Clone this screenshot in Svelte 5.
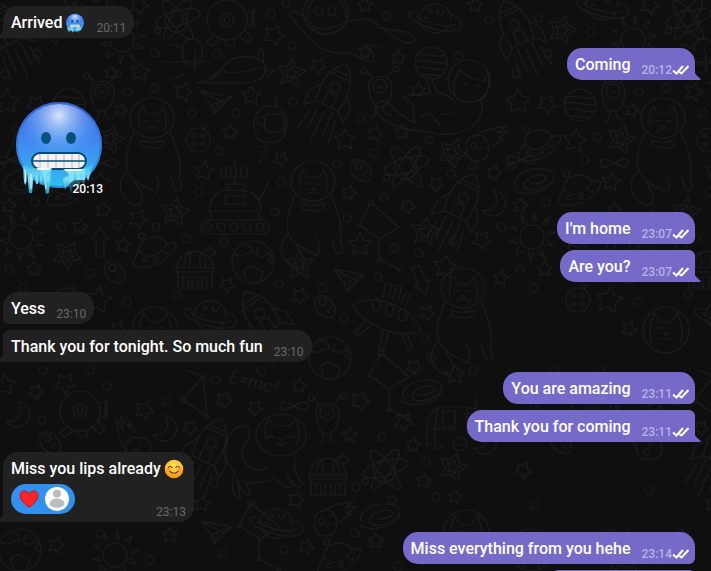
<script>
  const messages = [
    { text: "Arrived", emoji: "cold", time: "20:11", last: true },
    { own: true, text: "Coming", time: "20:12", first: true, last: true },
    { sticker: true, time: "20:13", first: true },
    { own: true, text: "I'm home", time: "23:07", first: true },
    { own: true, text: "Are you?", time: "23:07", last: true },
    { text: "Yess", time: "23:10", first: true },
    { text: "Thank you for tonight. So much fun", time: "23:10", last: true },
    { own: true, text: "You are amazing", time: "23:11", first: true },
    { own: true, text: "Thank you for coming", time: "23:11", last: true },
    { text: "Miss you lips already", emoji: "smile", time: "23:13", first: true, last: true, reaction: true },
    { own: true, text: "Miss everything from you hehe", time: "23:14", first: true },
    { own: true, text: "", last: true }
  ];

  // wallpaper doodles, one tile is 511 wide
  const tile = 511;
  const rings = [
    [155, 53], [217, 54], [271, 14], [292, 46], [286, 3], [387, 16], [128, 92], [155, 88], [192, 113],
    [236, 113], [293, 102], [361, 119], [374, 153], [219, 151], [281, 182], [199, 192], [337, 164],
    [384, 197], [275, 212], [347, 218], [117, 225], [156, 227], [186, 239], [224, 242], [378, 277],
    [279, 284], [489, 20], [27, 18], [80, 32], [459, 56], [37, 54], [5, 74], [429, 140], [86, 137],
    [473, 166], [0, 166], [451, 174], [74, 160], [35, 202], [501, 227], [453, 241], [419, 253],
    [395, 248], [9, 269], [61, 227], [90, 273], [127, 302], [177, 295], [43, 370], [107, 386],
    [90, 370], [261, 371], [216, 380], [167, 401], [42, 420], [214, 483], [322, 288], [344, 319],
    [425, 337], [431, 358], [473, 371], [382, 437], [356, 487], [426, 462], [392, 500], [436, 497],
    [355, 533], [223, 553], [284, 550], [398, 566], [23, 288], [138, 490], [24, 505], [100, 534], [150, 560]
  ];
  const stars = [
    [139, 5, 10], [274, 35, 11], [365, 5, 8], [318, 66, 8], [183, 92, 10], [140, 72, 10], [111, 73, 7],
    [251, 96, 10], [230, 132, 8], [345, 140, 11], [375, 134, 8], [204, 171, 10], [281, 159, 8],
    [349, 193, 8], [138, 219, 10], [123, 245, 8], [360, 245, 12], [475, 5, 8], [398, 58, 8],
    [418, 90, 8], [7, 102, 13], [36, 104, 10], [121, 110, 7], [64, 141, 12], [402, 132, 8],
    [494, 173, 8], [436, 184, 8], [408, 206, 8], [100, 182, 10], [9, 206, 8], [482, 240, 10],
    [445, 267, 12], [501, 278, 8], [80, 227, 8], [103, 210, 8], [34, 269, 8], [227, 285, 8],
    [98, 300, 14], [65, 383, 11], [36, 392, 8], [144, 410, 10], [224, 400, 9], [255, 408, 8],
    [190, 428, 8], [5, 385, 11], [300, 296, 9], [427, 313, 8], [414, 367, 8], [455, 375, 10],
    [299, 386, 8], [360, 401, 10], [404, 422, 10], [350, 435, 8], [424, 481, 8], [413, 445, 8],
    [455, 497, 7], [296, 500, 9], [376, 541, 8], [306, 547, 8], [202, 504, 8], [56, 545, 9],
    [118, 329, 8], [365, 52, 7], [12, 470, 9], [490, 545, 10], [170, 535, 8]
  ];
  const bigStars = [[291, 73], [51, 30], [110, 139], [175, 212], [300, 265], [452, 153], [425, 232], [67, 255], [453, 467]];
  const doodles = [
    ["atom", 177, 20], ["atom", 406, 167], ["atom", 385, 470], ["sub", 227, 20], ["sub", 80, 411],
    ["probe", 192, 62], ["shuttle", 240, 72], ["rocket", 332, 95, 25], ["rocket", 264, 320, -35],
    ["rocket", 7, 32, -25], ["rocket", 460, 205, 25], ["rocket", 208, 450, 25], ["alien", 380, 93],
    ["alien", 102, 98], ["alien", 327, 420], ["plane", 217, 100], ["plane", 350, 278], ["plane", 217, 530],
    ["helmet", 270, 122], ["bowling", 198, 140], ["cat", 152, 150], ["cat", 463, 320], ["cat", 313, 213],
    ["walker", 281, 450], ["curled", 442, 95], ["flying", 345, 35], ["tank", 235, 200], ["potato", 361, 171],
    ["potato", 115, 273], ["potato", 325, 307], ["potato", 50, 443], ["kite", 375, 235], ["kite", 385, 385],
    ["kite", 255, 535], ["striped", 431, 63], ["striped", 69, 105], ["saturn", 435, 18], ["saturn", 91, 5],
    ["saturn", 210, 315], ["saturn", 276, 523], ["sun", 122, 40], ["sun", 21, 237], ["galaxy", 23, 182],
    ["galaxy", 422, 393], ["galaxy", 380, 517], ["comet", 483, 143], ["comet", 133, 443, -90],
    ["comet", 331, 518], ["moon", 494, 202], ["moon", 18, 413], ["moon", 165, 427], ["ufo", 153, 252],
    ["ufo", 338, 558], ["ufo", 67, 190], ["ufo", 27, 145], ["lander", 387, 313], ["dome", 195, 268],
    ["dome", 328, 475], ["earth", 253, 262], ["earth", 330, 358], ["earth", 20, 550], ["arrow", 100, 245],
    ["arrow", 420, 278, 160], ["infinity", 103, 163], ["infinity", 294, 406], ["infinity", 10, 160],
    ["van", 447, 425], ["triangle", 197, 390], ["face", 155, 330], ["face", 466, 533], ["sun", 115, 555],
    ["moon", 485, 440], ["bowling", 67, 300]
  ];

  const shapes = {
    atom: "M-11-3A11 11 0 1 1 10 5A11 11 0 1 1-11-3M-22 4C-20-8 20-16 23-8S-16 15-22 4M-14-19C-5-24 20 14 15 19S-20-10-14-19M13-20C2-24-17 16-13 20S20-13 13-20M-20 8a3 3 0 1 0 1 0",
    sub: "M-20 0A20 20 0 1 1 20 0A20 20 0 1 1-20 0M-7 0A7 7 0 1 1 7 0A7 7 0 1 1-7 0M-3 0a3 3 0 1 0 6 0a3 3 0 1 0-6 0M20-8h5v14h-5M27-12v20M-13 16l-8 6 6 4 8-6M-3 20l2 5h8l1-6M12 16l8 7 5-4-7-9",
    probe: "M-9-10A10 10 0 1 0 10-10A10 10 0 1 0-9-10M-9 0h19M3-11v22M-30 0h22M12 0h7M-22-18l16 6M-22 18l16-7",
    shuttle: "M-44 11C-25 8-20-3-10-12C0-17 18-18 24-8C28 2 24 7 12 10C-4 12-25 10-44 11ZM-17-2C-14 4 10-1 22-5M18-13l2-11 4 2-1 12 4 8 8 0-8 6M-28 7l8-6",
    rocket: "M0-34C13-25 17-10 12 12H-12C-17-10-13-25 0-34M-9-24H9M-11-20H11M-5-8a5 5 0 1 0 10 0a5 5 0 1 0-10 0M-14-6l-9 12 1 15 10-9M14-6l9 12-1 15-10-9M-5 12V-1H5v13M-8 16v24M0 18v32M8 16v24M-14 22l-3 22M14 22l3 22",
    alien: "M-11-7C-12-20 12-20 12-7C12 4 8 10 4 13H-4C-8 10-11 2-11-7M-7-7a7 7 0 1 0 14 0a7 7 0 1 0-14 0M-2-7a2 2 0 1 0 4 0M-8-16l-5-6M8-16l5-7M-16-25a3 3 0 1 0 1 0M16-27a3 3 0 1 0 1 0M-3 14l-2 9-4 1M3 14l2 7 6 1",
    plane: "M-16-9L15-3 7 3-3 14-6 5ZM-16-9L7 3M-6 5L15-3M-6 5l3 9 4-11",
    helmet: "M-14 12C-20-4-12-17 3-16C15-14 18-4 16 8C15 18 6 22-4 20C-10 20-13 16-14 12M-5-5C-4-9 10-9 14-6V9C7 11-3 11-5 7ZM-13-1a4 4 0 1 0 8 0a4 4 0 1 0-8 0M6-16v-5M6-25a2 2 0 1 0 1 0",
    bowling: "M-12 0A12 12 0 1 1 12 0A12 12 0 1 1-12 0M-7-4q3-4 5 0q-3 3-5 0M2-4q3-4 5 0q-3 3-5 0M-7 4q3-4 5 0q-3 3-5 0M2 4q3-4 5 0q-3 3-5 0M6-15a2 2 0 1 0 1 0",
    face: "M-23 0A23 23 0 1 1 23 0A23 23 0 1 1-23 0M-14 14C-18 0-15-5-12-17L-5-8H5L12-17C15-5 18 0 14 14M-9-2h6M3-2h6M-2 3l2 2 2-2M-6 8q6 2 12 0",
    cat: "M-22-32A22 20 0 1 1 22-32A22 20 0 1 1-22-32M-13-24C-15-34-12-42-9-43L-5-36H6L11-43C15-34 15-25 13-20M-9-29h7M3-29h7M-2-23l2-2 2 2M-6-19q6-4 12 0M-18-18C-25 0-28 10-24 22C-18 34-8 35 4 43C8 35 7 30 3 24M18-18C26 0 30 14 27 28C32 36 28 45 22 38L18 25M-11-10q10 5 22 0v7q-11 2-22-1ZM-25 22C-40 34-28 56-13 55C-6 50-12 40-17 32",
    walker: "M-25-15A25 21 0 1 1 25-15A25 21 0 1 1-25-15M-14-8C-18-20-15-24-13-31L-6-24H8L15-31C17-24 20-12 15-6M-14-12q4-4 8 0M6-12q4-4 8 0M-2-12l2 2 2-2M-4-7q4 4 8 0M-46 22C-64 8-54-26-36-24C-22-18-44-2-38 8C-34 20-22 22-14 18M14 8C12 18 14 24 22 34C18 40 12 36 6 24L12 36C5 40 0 34-6 28C-16 32-28 34-36 32L-30 44C-36 48-42 36-44 30C-42 42-38 52-44 48C-52 40-48 28-46 20",
    curled: "M6-14A21 21 0 1 1 48-14A21 21 0 1 1 6-14M13 0C9-10 15-20 18-26L26-18 42-14 46-23C49-5 44 6 33 6M21-12l5 2M33-10l5 2M14 8C4-6-4 3-7-8C-15-28-19-23-12-3C-23 4-34-4-38 3C-22 10-32 18-26 28C-46 22-55-2-66 9C-72 24-40 36-18 36C25 48 45 24 39 7M-22 22l10-4 10 12M-2 20l12-2",
    flying: "M-42-22A22 20 0 1 1 4-22A22 20 0 1 1-42-22M-37-14C-40-28-33-33-30-36H-8C0-30 4-20 0-12M-30-24a4 5 0 1 0 8 0a4 5 0 1 0-8 0M-17-24a4 5 0 1 0 8 0a4 5 0 1 0-8 0M-28-7C-10-2 5-22 28-14C46 0 64 16 70 4C66-6 46-4 30-8M-30-6C-42-22-56-30-55-18C-42-10-34 22 5 18L22 26C28 30 34 22 21 10L38 12",
    tank: "M-26 11C-24-8-14-10 0-10S24-8 26 11ZM-24 11v9h48v-9M-26 20h52C37 20 37 34 26 34H-26C-37 34-37 20-26 20M-10-4h20v8h-20ZM-7-10v-6H9v6M0-16v-7M-14-32h26v9h-26ZM-9-32v9M-4-32v9M1-32v9M6-32v9M0-33v-7M24 0l10-18M24-36l8-16-8-2M-31 27a4 4 0 1 0 8 0a4 4 0 1 0-8 0M-18 27a4 4 0 1 0 8 0a4 4 0 1 0-8 0M-5 27a4 4 0 1 0 8 0a4 4 0 1 0-8 0M8 27a4 4 0 1 0 8 0a4 4 0 1 0-8 0M21 27a4 4 0 1 0 8 0a4 4 0 1 0-8 0",
    potato: "M-10-6C-8-14 2-12 6-6C14 2 10 13 2 10C-6 8-12 2-10-6M-6-5a3 3 0 1 0 7 0a3 3 0 1 0-7 0M2 3l3 3M5 0l1 2",
    kite: "M-4-32L-16-10 4 4 24-8ZM4 4v20l20 10M-7-32a3 3 0 1 0 6 0a3 3 0 1 0-6 0M-18-10a2 2 0 1 0 4 0M2 24a2 2 0 1 0 4 0M22 34a2 2 0 1 0 4 0",
    triangle: "M6-14L-14 10 10 26ZM-10-20l16 6M4-14a2 2 0 1 0 4 0M-17 10a3 3 0 1 0 6 0a3 3 0 1 0-6 0M8 26a2 2 0 1 0 4 0",
    striped: "M-16 0A16 16 0 1 1 16 0A16 16 0 1 1-16 0M-14-7C-4-12 4-4 14-8M-16-1C-5-6 6 3 16-1M-15 5C-5 1 5 9 14 6M-10 12C-3 9 4 14 9 12",
    saturn: "M-16 0A16 15 0 0 1 16 2M-15 4A16 15 0 0 0 14 8M-18-6C-32-8-28 2-8 9S30 14 26 4C24 0 20-2 16-3M-18-2C-22 0 10 12 20 6M-7-7a2 2 0 1 0 4 0a2 2 0 1 0-4 0M3-8a3 3 0 1 0 5 0M-10-1l3 2",
    sun: "M-12 0A12 12 0 1 1 12 0A12 12 0 1 1-12 0M-15-6l-6-4 6 1M-15 2l-7 2 8 2M-9-13l-2-9 5 7M1-16l1-9 2 9M10-13l7-7-3 9M15-5l9 0-8 4M15 4l7 5-9-1M9 12l4 9-7-6M1 15l-2 9-3-9M-8 13l-8 5 3-8",
    galaxy: "M-17 6C-26-2-8-15 8-13S24-2 10 5-14 6-9 0 8-9 12-5 0 4-3 1M-20 8C-10 16 18 10 20-4",
    comet: "M-16 5A11 10 0 1 1 5 5A11 10 0 1 1-16 5M-8-6C2-15 12-14 23-17L14-10 26-12 15-4 21-4 8 4M-12 3a3 3 0 1 0 6 0a3 3 0 1 0-6 0M-3 7l3-2M0-1l2-3",
    moon: "M0-12C13-9 16 8 4 13C-3 16-9 12-12 8C0 10 7 0 0-12",
    ufo: "M-14-2C-14-16 8-20 14-8C24-12 26-8 18 2C8 16-14 18-20 13C-20 6-16 4-14-2M-14-2C-8 8 6 6 14-8M-11 8a2 2 0 1 0 4 0a2 2 0 1 0-4 0M1 7a2 2 0 1 0 4 0a2 2 0 1 0-4 0M11 0a2 2 0 1 0 4 0M-12-19a3 3 0 1 0 1 0",
    lander: "M-34-8C-20-20 22-12 34 18C10 28-26 10-34-8M-14-8a4 4 0 1 0 7 0a4 4 0 1 0-7 0M-1-3a4 4 0 1 0 7 0a4 4 0 1 0-7 0M12 2a4 4 0 1 0 7 0a4 4 0 1 0-7 0M-22 8l-11 12 4 3 12-10M-4 18l-4 18 5 1 5-18M14 20l8 18 4-2-7-17M-4-16l3-14 6 1-3 14M6-14l4-14 5 2-4 14M14-11l5-10 5 3-6 10",
    dome: "M-18 0C-18-22 18-22 18 0ZM-19 0h38v4h-38ZM-17 5v15h34V5M-11 0C-11-14-5-16-2-17M11 0C11-14 5-16 2-17M-5 0v-16M5 0v-16M9-16l6-5 6 6-6 4M-12 20v-11h5v11M-3 20v-11h6v11M7 20v-11h5v11",
    earth: "M-21 0A21 21 0 1 1 21 0A21 21 0 1 1-21 0M-19-8q8 5 10 0l9-2-4-7-8-1M-7 18l-2-10 7-4 12 6-3 9M5-14l-2 6 6 3 6-4 4 4-4 4 4 2",
    arrow: "M-4 12V-5h-4L0-18 8-5H4v17Z",
    infinity: "M-14 0C-12-8-4-2 0 0S14 8 14 0 4-2 0 0-14 8-14 0",
    van: "M-20 20C-22 0-18-18-4-18H20V10M20 20H6M-20 20h8M-12 20a3 3 0 1 0 7 0M6 19a7 7 0 1 0 14 0a7 7 0 1 0-14 0M-8-18C-12-8-12 8-12 18M-4-14h12v16h-12ZM-20 4h32M16-18l20 3M16-12l20 3M28-16l2-14"
  };

  function starPoints(x, y, r) {
    const tilt = ((x * 7 + y * 3) % 5) * 0.14;
    return Array.from({ length: 10 }, (_, i) => {
      const d = i % 2 ? r * 0.5 : r;
      const a = (i * Math.PI) / 5 - Math.PI / 2 + tilt;
      return `${(x + d * Math.cos(a)).toFixed(1)},${(y + d * Math.sin(a)).toFixed(1)}`;
    }).join(" ");
  }
</script>

{#snippet coldFace()}
  <svg class="face" viewBox="11 9 90 96" role="img" aria-label="cold face">
    <defs>
      <linearGradient id="cold" x1="0" y1="0" x2="0" y2="1">
        <stop offset="0" stop-color="#3f62dc" />
        <stop offset="0.5" stop-color="#3f8cf0" />
        <stop offset="1" stop-color="#2cc0f2" />
      </linearGradient>
      <radialGradient id="shine" cx="0.5" cy="0.14" r="0.5">
        <stop offset="0" stop-color="#f4f8ff" stop-opacity="0.85" />
        <stop offset="1" stop-color="#6cb0ff" stop-opacity="0" />
      </radialGradient>
      <linearGradient id="ice" x1="0" y1="0" x2="0" y2="1">
        <stop offset="0" stop-color="#35b4ee" />
        <stop offset="0.5" stop-color="#7fdcf2" />
        <stop offset="1" stop-color="#149bc9" />
      </linearGradient>
    </defs>
    <circle cx="56" cy="55" r="43" fill="url(#cold)" />
    <circle cx="56" cy="55" r="41" fill="url(#shine)" />
    <circle cx="56" cy="55" r="42" fill="none" stroke="#3569ce" stroke-width="2" opacity="0.6" />
    <path d="M20 75l1 18 2 2 1-13 2 21 3 0 2-19 2 10 2 0 1-11 2 13 2-10 3 18 3-1 2-20ZM60 88l2 12 3-8 3 12 4-18 3 16 3-13 3 8 2-14 2 9 5-18Z" fill="url(#ice)" />
    <path d="M22 79l1 13M28 84l0 15M42 88l1 11" stroke="#e6faff" stroke-width="1" />
    <ellipse cx="43" cy="48" rx="5" ry="6" fill="#06527c" />
    <ellipse cx="68" cy="48" rx="5" ry="6" fill="#06527c" />
    <rect x="29" y="63" width="54" height="16" rx="8" fill="#f3f1f5" stroke="#064a6d" stroke-width="2" />
    <path d="M37 64v14M45 64v14M53 64v14M61 64v14M69 64v14M76 64v14" stroke="#bcb9c5" />
    <path d="M29 71h54" stroke="#064a6d" stroke-width="1.5" />
    <path d="M32 78h17l-2 5-3-1-1 16-3-14-3-4ZM60 79h23l-2 9-3-5-2 8-4-9-4 13-3-12Z" fill="#7fe2f5" />
    <path d="M34 79h13M62 80h17" stroke="#f2fdff" stroke-width="2" />
  </svg>
{/snippet}

<main class="chat">
  <svg class="wallpaper" aria-hidden="true">
    <defs>
      <pattern id="doodles" width={tile} height="571" patternUnits="userSpaceOnUse">
        {#each [-tile, 0, tile] as shift}
          <g class="doodle" transform="translate({shift} 0)">
            {#each rings as [x, y]}
              <circle cx={x} cy={y} r="4" />
            {/each}
            {#each stars as [x, y, r]}
              <polygon points={starPoints(x, y, r)} />
            {/each}
            {#each bigStars as [x, y]}
              <polygon points={starPoints(x, y, 15)} />
              <polygon points={starPoints(x, y, 7)} />
            {/each}
            {#each doodles as [name, x, y, turn = 0]}
              <path d={shapes[name]} transform="translate({x} {y}) rotate({turn})" />
            {/each}
            <text x="228" y="382" transform="rotate(14 228 382)">E=mc²</text>
          </g>
        {/each}
      </pattern>
    </defs>
    <rect width="100%" height="100%" fill="url(#doodles)" />
  </svg>

  <div class="messages">
    {#each messages as m}
      {#if m.sticker}
        <div class="sticker first">
          {@render coldFace()}
          <time>{m.time}</time>
        </div>
      {:else}
        <div class="bubble" class:own={m.own} class:first={m.first} class:last={m.last} class:empty={!m.text}>
          {#if m.last}
            <svg class="tail" viewBox="0 0 9 17" aria-hidden="true">
              <path d="M3 17h6V0C9 7 6 12 0 16Q0 17 3 17Z" />
            </svg>
          {/if}
          {#if m.text}
            <div class="text">
              {m.text}
              {#if m.emoji === "cold"}
                <span class="emoji">{@render coldFace()}</span>
              {:else if m.emoji === "smile"}
                <span class="emoji">
                  <svg viewBox="0 0 20 20" role="img" aria-label="smiling face">
                    <defs>
                      <radialGradient id="warm" cx="0.5" cy="0.3" r="0.7">
                        <stop offset="0" stop-color="#ffe45c" />
                        <stop offset="0.6" stop-color="#ffbf2e" />
                        <stop offset="1" stop-color="#f28b12" />
                      </radialGradient>
                    </defs>
                    <circle cx="10" cy="10" r="9.3" fill="url(#warm)" />
                    <circle cx="4.5" cy="11" r="2.3" fill="#ff8246" opacity="0.55" />
                    <circle cx="15.5" cy="11" r="2.3" fill="#ff8246" opacity="0.55" />
                    <path d="M4.5 8.5q1.7-2.5 3.5 0M12 8.5q1.7-2.5 3.5 0M6 12.5q4 3.5 8 0" fill="none" stroke="#6b3a0c" stroke-width="1.2" stroke-linecap="round" />
                  </svg>
                </span>
              {/if}
            </div>
          {/if}
          {#if m.reaction}
            <button class="reaction" aria-label="Heart reaction">
              <svg class="heart" viewBox="0 0 20 20" aria-hidden="true">
                <path d="M10 18.5C5 14.5 1 11 1 6.5C1 1 8 .5 10 5C12 .5 19 1 19 6.5C19 11 15 14.5 10 18.5Z" fill="#fd2427" stroke="#c31627" />
              </svg>
              <svg class="avatar" viewBox="0 0 24 24" aria-hidden="true">
                <circle cx="12" cy="12" r="12" fill="#fff" />
                <circle cx="12" cy="6.5" r="4" fill="#bdbdbd" />
                <path d="M4.5 17C4.5 9.5 19.5 9.5 19.5 17C18 22 6 22 4.5 17Z" fill="#bdbdbd" />
              </svg>
            </button>
          {/if}
          {#if m.time}
            <span class="meta">
              <time>{m.time}</time>
              {#if m.own}
                <svg class="ticks" viewBox="0 0 18 10" role="img" aria-label="read">
                  <path d="M1 5.5L4.5 8.5L11 1M7.5 7L9.5 8.5L16.5 1" />
                </svg>
              {/if}
            </span>
          {/if}
        </div>
      {/if}
    {/each}
  </div>
</main>

<style>
  :global(body) {
    background: #0f0f0f;
  }
  .chat {
    position: relative;
    height: 100vh;
    overflow: hidden;
    font-family: Roboto, "Liberation Sans", sans-serif;
    font-size: 16px;
    line-height: 21px;
    color: #fff;
  }
  .wallpaper {
    position: absolute;
    inset: 0;
    width: 100%;
    height: 100%;
  }
  .doodle {
    fill: none;
    stroke: #1b1b1c;
    stroke-width: 1.2;
    stroke-linejoin: round;
    stroke-linecap: round;
  }
  .doodle text {
    fill: #1b1b1c;
    stroke: none;
    font-size: 18px;
    font-style: italic;
  }
  .messages {
    position: relative;
    display: flex;
    flex-direction: column;
    align-items: flex-start;
    gap: 6px;
    padding: 6px 16px 0 3px;
  }
  .bubble {
    position: relative;
    display: flex;
    flex-wrap: wrap;
    align-items: flex-end;
    column-gap: 11px;
    row-gap: 5px;
    max-width: 480px;
    box-sizing: border-box;
    padding: 6px 8px 5px 8px;
    border-radius: 6px 15px 15px 6px;
    background: #212121;
  }
  .first {
    margin-top: 4px;
  }
  .bubble.first,
  .bubble:first-child {
    border-top-left-radius: 15px;
  }
  .bubble.last {
    border-bottom-left-radius: 0;
  }
  .own {
    align-self: flex-end;
    padding-right: 5px;
    border-radius: 15px 6px 6px 15px;
    background: #766ac8;
  }
  .own.first {
    border-top-right-radius: 15px;
  }
  .own.last {
    border-bottom-left-radius: 15px;
    border-bottom-right-radius: 0;
  }
  .own.empty {
    width: 150px;
    height: 32px;
  }
  .tail {
    position: absolute;
    bottom: 0;
    left: -6px;
    width: 9px;
    height: 17px;
    fill: #212121;
  }
  .own .tail {
    left: auto;
    right: -6px;
    transform: scaleX(-1);
    fill: #766ac8;
  }
  .text {
    display: flex;
    align-items: center;
    gap: 3px;
    font-weight: 500;
  }
  .emoji {
    display: flex;
    width: 20px;
    height: 20px;
  }
  .emoji svg {
    width: 100%;
    height: 100%;
  }
  .meta {
    display: flex;
    align-items: center;
    height: 18px;
    margin-bottom: -4px;
    margin-left: auto;
    font-size: 12px;
    line-height: 18px;
    color: #686868;
  }
  .own .meta {
    color: #b9b1e6;
    font-weight: 500;
  }
  .ticks {
    width: 18px;
    height: 10px;
    fill: none;
    stroke: #fff;
    stroke-width: 2;
  }
  .bubble:has(.reaction) {
    width: 191px;
  }
  .bubble:has(.reaction) .text {
    flex-basis: 100%;
  }
  .reaction {
    display: flex;
    align-items: center;
    gap: 6px;
    height: 30px;
    margin: 0 0 3px;
    padding: 0 6px 0 8px;
    border: 0;
    border-radius: 15px;
    background: #3390ec;
  }
  .heart {
    width: 20px;
    height: 20px;
  }
  .avatar {
    width: 24px;
    height: 24px;
  }
  .sticker {
    position: relative;
    box-sizing: border-box;
    width: 112px;
    height: 112px;
    padding: 9px 11px;
  }
  .sticker .face {
    display: block;
    width: 90px;
    height: 96px;
  }
  .sticker time {
    position: absolute;
    right: 7px;
    bottom: 4px;
    padding: 0 5px;
    border-radius: 9px;
    background: rgba(15, 15, 15, 0.6);
    font-size: 12px;
    font-weight: 500;
    line-height: 18px;
  }
</style>
